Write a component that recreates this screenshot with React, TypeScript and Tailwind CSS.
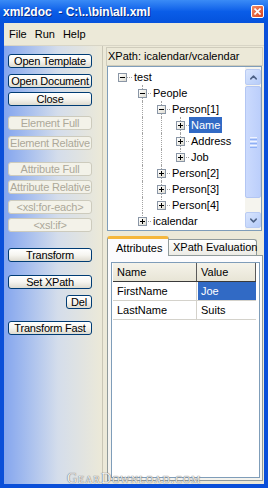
import React from 'react';
import { ChevronUp, ChevronDown } from 'lucide-react';

type Row = { label: string; d: number; box: '+' | '-'; last: boolean; anc: number[]; sel?: boolean };

const rows: Row[] = [
  { label: 'test', d: 0, box: '-', last: true, anc: [] },
  { label: 'People', d: 1, box: '-', last: false, anc: [] },
  { label: 'Person[1]', d: 2, box: '-', last: false, anc: [1] },
  { label: 'Name', d: 3, box: '+', last: false, anc: [1, 2], sel: true },
  { label: 'Address', d: 3, box: '+', last: false, anc: [1, 2] },
  { label: 'Job', d: 3, box: '+', last: true, anc: [1, 2] },
  { label: 'Person[2]', d: 2, box: '+', last: false, anc: [1] },
  { label: 'Person[3]', d: 2, box: '+', last: false, anc: [1] },
  { label: 'Person[4]', d: 2, box: '+', last: true, anc: [1] },
  { label: 'icalendar', d: 1, box: '+', last: true, anc: [] },
];

const colLeft = ['left-[14px]', 'left-[34px]', 'left-[53px]', 'left-[72px]'];
const boxLeft = ['left-[10px]', 'left-[30px]', 'left-[49px]', 'left-[68px]'];
const hLine = ['left-[14px] w-[10px]', 'left-[34px] w-[9px]', 'left-[53px] w-[9px]', 'left-[72px] w-[9px]'];
const textPad = ['pl-[24px]', 'pl-[43px]', 'pl-[62px]', 'pl-[81px]'];

function TreeRow({ r }: { r: Row }) {
  return (
    <div className={`relative h-[16px] flex items-center ${textPad[r.d]}`}>
      {r.anc.map((j) => (
        <span key={j} className={`absolute top-0 bottom-0 w-0 border-l border-dotted border-[#a3a3a3] ${colLeft[j]}`} />
      ))}
      {r.d > 0 && (
        <span
          className={`absolute top-0 w-0 border-l border-dotted border-[#a3a3a3] ${colLeft[r.d]} ${r.last ? 'h-[9px]' : 'bottom-0'}`}
        />
      )}
      <span className={`absolute top-[8px] h-0 border-t border-dotted border-[#a3a3a3] ${hLine[r.d]}`} />
      <span
        className={`absolute top-[4px] z-10 w-[9px] h-[9px] border border-[#8a96a6] bg-linear-to-br from-white to-[#dedcd2] ${boxLeft[r.d]}`}
      >
        <span className="absolute left-[1px] top-[3px] w-[5px] h-[1px] bg-black" />
        {r.box === '+' && <span className="absolute left-[3px] top-[1px] w-[1px] h-[5px] bg-black" />}
      </span>
      <span
        className={`h-[16px] px-[2px] flex items-center text-[11px] leading-none ${
          r.sel ? 'bg-[#316ac5] text-white' : 'text-black'
        }`}
      >
        {r.label}
      </span>
    </div>
  );
}

function Btn({ label, disabled, cls }: { label: string; disabled?: boolean; cls: string }) {
  return (
    <div
      className={`h-[14px] flex items-center justify-center rounded-[3px] border text-[11px] leading-none whitespace-nowrap tracking-[-0.2px] ${
        disabled
          ? 'border-[#cdcbbd] bg-[#f3f2e9] text-[#aca899]'
          : 'border-[#003c74] bg-linear-to-b from-white via-[#f6f5f0] to-[#dedbd0] text-black'
      } ${cls}`}
    >
      {label}
    </div>
  );
}

function ScrollBtn({ up }: { up?: boolean }) {
  return (
    <div className="h-[16px] w-[16px] rounded-[2px] border border-[#b9cbf3] bg-linear-to-br from-[#d9e5fd] to-[#b6ccf9] flex items-center justify-center">
      {up ? (
        <ChevronUp size={11} strokeWidth={3.2} color="#4d6185" />
      ) : (
        <ChevronDown size={11} strokeWidth={3.2} color="#4d6185" />
      )}
    </div>
  );
}

export default function App() {
  return (
    <div className="relative w-[268px] h-[488px] overflow-hidden flex flex-col bg-[#0a4fd9] font-['Liberation_Sans',Arial,sans-serif]">
      {/* Title bar */}
      <div className="h-[23px] shrink-0 flex items-center justify-between bg-linear-to-b from-[#3a8bf6] via-[#0a5de8] to-[#0552dc]">
        <span className="pl-[3px] text-[12px] font-bold text-white whitespace-pre leading-none [text-shadow:1px_1px_0_#0a2f8a]">
          xml2doc  - C:\..\bin\all.xml
        </span>
        <div className="mr-[4px] w-[13px] h-[13px] rounded-[2px] border border-white bg-linear-to-br from-[#f08a64] to-[#d9431c] flex items-center justify-center">
          <svg width="7" height="7" viewBox="0 0 7 7">
            <path d="M0.5 0.5 L6.5 6.5 M6.5 0.5 L0.5 6.5" stroke="white" strokeWidth="1.6" />
          </svg>
        </div>
      </div>

      {/* Client */}
      <div className="flex-1 mx-[4px] mb-[4px] bg-[#ece9d8] flex flex-col min-h-0">
        {/* Menu */}
        <div className="h-[22px] shrink-0 flex items-center gap-[8px] pl-[5px] text-[11px] text-black">
          <span>File</span>
          <span>Run</span>
          <span>Help</span>
        </div>

        {/* Main */}
        <div className="flex-1 flex min-h-0 border-t border-[#d8d5c6]">
          {/* Left panel */}
          <div className="w-[99px] shrink-0 flex flex-col pl-[4px] border-r border-[#c9c6b6] bg-linear-to-r from-[#84a5ee] via-[#d4ddeb] via-55% to-[#ece9d8]">
            <Btn label="Open Template" cls="mt-[8px] w-[84px]" />
            <Btn label="Open Document" cls="mt-[6px] w-[84px]" />
            <Btn label="Close" cls="mt-[4px] w-[84px]" />
            <Btn label="Element Full" disabled cls="mt-[10px] w-[84px]" />
            <Btn label="Element Relative" disabled cls="mt-[6px] w-[84px]" />
            <Btn label="Attribute Full" disabled cls="mt-[12px] w-[84px]" />
            <Btn label="Attribute Relative" disabled cls="mt-[4px] w-[84px]" />
            <Btn label="<xsl:for-each>" disabled cls="mt-[6px] w-[84px]" />
            <Btn label="<xsl:if>" disabled cls="mt-[4px] w-[84px]" />
            <Btn label="Transform" cls="mt-[16px] w-[84px]" />
            <Btn label="Set XPath" cls="mt-[13px] w-[84px]" />
            <div className="mt-[6px] w-[84px] flex justify-end">
              <Btn label="Del" cls="w-[26px]" />
            </div>
            <Btn label="Transform Fast" cls="mt-[12px] w-[84px]" />
          </div>

          {/* Right panel */}
          <div className="flex-1 flex flex-col pl-[3px] pr-[1px] pt-[1px] pb-[3px] min-w-0">
            {/* XPath label */}
            <div className="h-[19px] shrink-0 flex items-center pl-[1px] border border-[#cfccbc] text-[11px] text-black whitespace-nowrap">
              XPath: icalendar/vcalendar
            </div>

            {/* Tree */}
            <div className="h-[165px] shrink-0 mx-[1px] flex border border-[#7f9db9] bg-white">
              <div className="flex-1 relative pt-[2px] overflow-hidden">
                {rows.map((r) => (
                  <TreeRow key={r.label} r={r} />
                ))}
              </div>
              <div className="w-[16px] flex flex-col py-[2px] bg-[#f5f4ee]">
                <ScrollBtn up />
                <div className="mt-[1px] h-[112px] rounded-[2px] border border-[#b3c6f3] bg-linear-to-r from-[#cbdafd] to-[#bccffb] flex flex-col items-center justify-center gap-[1px]">
                  <span className="w-[7px] h-[1px] bg-[#eef3ff]" />
                  <span className="w-[7px] h-[1px] bg-[#8fb0f5]" />
                  <span className="w-[7px] h-[1px] bg-[#eef3ff]" />
                  <span className="w-[7px] h-[1px] bg-[#8fb0f5]" />
                  <span className="w-[7px] h-[1px] bg-[#eef3ff]" />
                  <span className="w-[7px] h-[1px] bg-[#8fb0f5]" />
                </div>
                <div className="flex-1" />
                <ScrollBtn />
              </div>
            </div>

            {/* Tabs */}
            <div className="mt-[5px] ml-[1px] h-[19px] shrink-0 flex items-end">
              <div className="relative z-10 -mb-[1px] w-[62px] h-[20px] flex items-center pl-[8px] pt-[2px] border-x border-[#919b9c] border-t-[3px] border-t-[#f5b73c] rounded-t-[3px] bg-[#fcfcfe] text-[11px] text-black">
                Attributes
              </div>
              <div className="w-[88px] h-[16px] flex items-center pl-[4px] border-t border-r border-[#919b9c] rounded-tr-[3px] bg-linear-to-b from-white to-[#ecebe5] text-[11px] text-black whitespace-nowrap">
                XPath Evaluation
              </div>
            </div>

            {/* Tab page */}
            <div className="flex-1 ml-[1px] flex flex-col border border-[#919b9c] bg-linear-to-b from-[#fcfcfe] to-[#f4f3ee] pl-[3px] pr-[2px] pt-[6px] pb-[2px] min-h-0">
              <div className="flex-1 border border-[#7f9db9] bg-white pl-[1px] pr-[2px]">
                <div className="w-[143px] flex flex-col text-[11px] text-black">
                  <div className="h-[19px] flex border-b border-[#3a3a3a] bg-linear-to-b from-[#f5f3ea] to-[#e8e5d6]">
                    <div className="w-[84px] flex items-center pl-[4px] border-r border-[#5a5a5a]">Name</div>
                    <div className="flex-1 flex items-center pl-[4px] border-r border-[#5a5a5a]">Value</div>
                  </div>
                  <div className="h-[19px] flex border-b border-[#d4d2cb]">
                    <div className="w-[84px] flex items-center pl-[4px] border-r border-[#d4d2cb]">FirstName</div>
                    <div className="flex-1 flex items-center pl-[3px] ml-[1px] bg-[#316ac5] text-white">Joe</div>
                  </div>
                  <div className="h-[19px] flex border-b border-[#d4d2cb]">
                    <div className="w-[84px] flex items-center pl-[4px] border-r border-[#d4d2cb]">LastName</div>
                    <div className="flex-1 flex items-center pl-[4px]">Suits</div>
                  </div>
                </div>
              </div>
            </div>
          </div>
        </div>
      </div>

      {/* Watermark */}
      <div className="absolute left-0 right-0 bottom-[2px] text-center text-[14px] leading-none tracking-[1px] [font-variant:small-caps] font-['Liberation_Serif',serif] text-white/90 [text-shadow:0_0_1px_#6b6b6b,0_0_1px_#6b6b6b]">
        GearDownload.com
      </div>
    </div>
  );
}
